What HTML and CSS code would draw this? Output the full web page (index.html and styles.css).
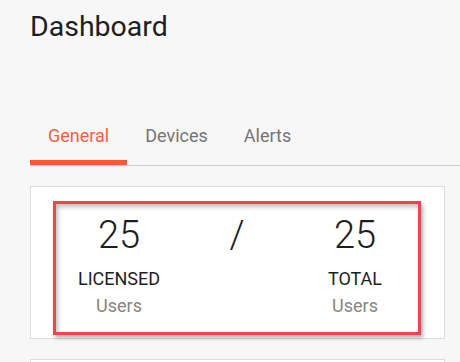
FILE: index.html
```html
<!DOCTYPE html>
<html lang="en">
<head>
  <meta charset="UTF-8" />
  <meta name="viewport" content="width=device-width, initial-scale=1.0"/>
  <title>Dashboard</title>
  <link rel="stylesheet" href="styles.css">
</head>
<body>
  <div class="page">
    <h1>Dashboard</h1>

    <div class="tabs">
      <a class="tab ativo">General</a>
      <a class="tab">Devices</a>
      <a class="tab">Alerts</a>
    </div>

    <div class="card">
      <div class="destaque">
        <div class="stats">
          <div class="stat">
            <div class="numero">25</div>
            <div class="rotulo">LICENSED</div>
            <div class="sub">Users</div>
          </div>
          <div class="stat">
            <div class="numero">/</div>
          </div>
          <div class="stat">
            <div class="numero">25</div>
            <div class="rotulo">TOTAL</div>
            <div class="sub">Users</div>
          </div>
        </div>
      </div>
    </div>

    <div class="card vazio"></div>
  </div>
</body>
</html>
```

FILE: styles.css
```css
body {
  margin: 0;
  padding: 0;
  background-color: #f7f7f7;
  color: #222;
  font-family: Roboto, 'Noto Sans', sans-serif;
  overflow: hidden;
}

.page {
  padding: 10px 15px 0 30px;
}

h1 {
  margin: 0;
  font-size: 28.5px;
  font-weight: 400;
  line-height: 34px;
  color: #1e1e1e;
}

.tabs {
  display: flex;
  margin-top: 69px;
  margin-right: -15px;
  border-bottom: 1px solid #cfcfcf;
}

.tab {
  padding: 0 18px 1px;
  font-size: 18px;
  line-height: 46px;
  color: #757575;
  border-bottom: 5px solid transparent;
  cursor: pointer;
}

.tab.ativo {
  color: #ff5c45;
  border-bottom-color: #ff5733;
}

.card {
  background-color: white;
  border: 1px solid #dddddd;
  margin-top: 20px;
}

.card.vazio {
  height: 40px;
}

.destaque {
  margin: 14px 23px 3px 22px;
  border: 3px solid #f4434a;
  box-shadow: 2px 3px 4px rgba(0, 0, 0, 0.3), inset 2px 3px 4px rgba(0, 0, 0, 0.25);
  padding: 9px 0 13px;
}

.stats {
  display: grid;
  grid-template-columns: repeat(3, 118px);
  justify-content: center;
  text-align: center;
}

.numero {
  font-size: 38px;
  font-weight: 300;
  line-height: 44px;
  color: #1e1e1e;
}

.rotulo {
  margin-top: 8px;
  font-size: 18px;
  line-height: 27px;
  color: #1e1e1e;
}

.sub {
  font-size: 18px;
  line-height: 27px;
  color: #858585;
}
```
